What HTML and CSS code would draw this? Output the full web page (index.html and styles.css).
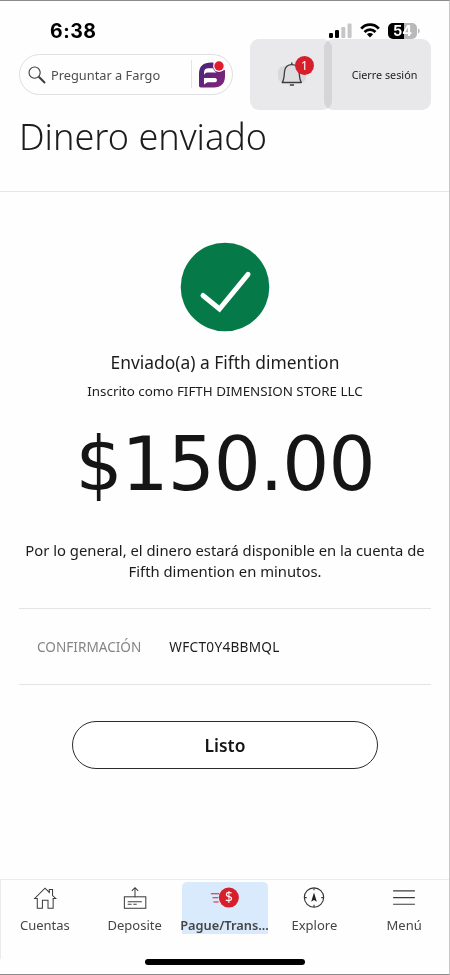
FILE: index.html
```html
<!DOCTYPE html>
<html lang="es">
<head>
  <meta charset="UTF-8">
  <meta name="viewport" content="width=device-width, initial-scale=1.0">
  <title>Dinero enviado</title>
  <link rel="stylesheet" href="styles.css">
</head>
<body>
  <div class="screen">
    <!-- Status bar -->
    <div class="status-bar">
      <span class="time">6:38</span>
      <div class="status-icons">
        <svg class="signal" width="23" height="15" viewBox="0 0 23 15">
          <rect x="0" y="10" width="4" height="5" rx="1.2" fill="#000"/>
          <rect x="6" y="7" width="4" height="8" rx="1.2" fill="#000"/>
          <rect x="12.3" y="4" width="4" height="11" rx="1.2" fill="#c6c6c8"/>
          <rect x="18.6" y="0.5" width="4" height="14.5" rx="1.2" fill="#c6c6c8"/>
        </svg>
        <svg class="wifi" width="20" height="15" viewBox="0 0 20 15" fill="none" stroke="#000" stroke-width="2.7">
          <path d="M1.2 5.6 C6 0.4 14 0.4 18.8 5.6"/>
          <path d="M4.5 9 C7.6 5.8 12.4 5.8 15.5 9"/>
          <path d="M10 14.6 L6.9 11.3 C8.7 9.7 11.3 9.7 13.1 11.3 Z" fill="#000" stroke="none"/>
        </svg>
        <div class="battery"><span>54</span></div>
        <svg class="battery-tip" width="2" height="6" viewBox="0 0 2 6">
          <path d="M0 0.5 C2.3 1.5 2.3 4.5 0 5.5 Z" fill="#b9b9bb"/>
        </svg>
      </div>
    </div>

    <!-- Search and account actions -->
    <div class="header">
      <div class="search">
        <svg width="18" height="18" viewBox="0 0 18 18" fill="none" stroke="#3c3c3c">
          <circle cx="6.6" cy="6.6" r="5.6" stroke-width="1.1"/>
          <path d="M10.8 10.8 L17 17" stroke-width="2"/>
        </svg>
        <span class="search-text">Preguntar a Fargo</span>
        <svg class="fargo" width="26" height="28" viewBox="0 0 26 28">
          <defs>
            <linearGradient id="purple" x1="0" y1="0" x2="1" y2="1">
              <stop offset="0" stop-color="#452478"/>
              <stop offset="1" stop-color="#87247c"/>
            </linearGradient>
          </defs>
          <path fill="url(#purple)" d="M0 25.5 V14 C0 6 4.5 2.5 12 2.5 H14 L20 11 L26 10 V16 C26 23.5 22 27.5 15 27.5 H2 C0.7 27.5 0 26.8 0 25.5 Z"/>
          <path fill="#fff" d="M5 15 V13 C5 9.6 6.5 8.2 9.5 8.2 H14.2 C14.7 10.2 16 11.6 17.6 12.4 H8.5 C6.8 12.4 5.6 13.4 5 15 Z"/>
          <path fill="#fff" d="M5 18 H16 C18.6 18 18.6 22.3 16 22.3 H8.5 L5 24.5 Z"/>
          <circle cx="20" cy="6" r="5.9" fill="#fff"/>
          <circle cx="20" cy="6" r="4.7" fill="#e31b2d"/>
        </svg>
      </div>
      <div class="actions">
        <div class="alerts">
          <svg width="36" height="34" viewBox="0 0 36 34">
            <rect x="0" y="9" width="28" height="17" rx="6" fill="#d9d9dc"/>
            <path d="M4.2 25.5 C6.3 22.5 6 19 6.6 14 C7.3 9.3 9.7 7.6 13.8 7.6 C17.9 7.6 20.3 9.3 21 14 C21.6 19 21.3 22.5 23.4 25.5 Z" fill="#dedee0" stroke="#3c3c3c" stroke-width="1.3" stroke-linejoin="round"/>
            <path d="M13.8 5.4 V7.6 M11.8 28 H16" fill="none" stroke="#3c3c3c" stroke-width="1.4"/>
          </svg>
          <span class="badge">1</span>
        </div>
        <div class="sign-off">Cierre sesión</div>
      </div>
    </div>

    <h1>Dinero enviado</h1>

    <!-- Confirmation details -->
    <div class="content">
      <svg class="check" width="90" height="90" viewBox="0 0 90 90">
        <circle cx="45" cy="45" r="44.3" fill="#057a48"/>
        <path d="M23 53.5 L39.5 67 L68 32.3" fill="none" stroke="#fff" stroke-width="5" stroke-linecap="round" stroke-linejoin="miter"/>
      </svg>
      <p class="recipient">Enviado(a) a Fifth dimention</p>
      <p class="enrolled">Inscrito como FIFTH DIMENSION STORE LLC</p>
      <p class="amount">$150.00</p>
      <p class="notice">Por lo general, el dinero estará disponible en la cuenta de<br>Fifth dimention en minutos.</p>
      <div class="confirmation">
        <span class="label">CONFIRMACIÓN</span>
        <span class="code">WFCT0Y4BBMQL</span>
      </div>
      <button class="done">Listo</button>
    </div>

    <!-- Bottom navigation -->
    <div class="nav">
      <div class="nav-item">
        <svg width="28" height="28" viewBox="0 0 28 28" fill="none" stroke="#3c3c3c" stroke-width="1.2">
          <path d="M4.5 14.5 L2 14.5 L14 2.5 L19 7.5 V4 H22.8 V11.2 L26.5 14.5 H23.5 V26 H17.5 V16.7 H11 V26 H5 V14.5 Z"/>
        </svg>
        <span>Cuentas</span>
      </div>
      <div class="nav-item">
        <svg width="28" height="28" viewBox="0 0 28 28" fill="none" stroke="#3c3c3c" stroke-width="1.2">
          <rect x="1.6" y="12.6" width="25" height="13.4"/>
          <path d="M14 13 V2 M10.3 5.6 L14 1.9 L17.7 5.6"/>
          <path d="M5.5 18.5 H22 M5.5 21.3 H10 M12 21.3 H16"/>
        </svg>
        <span>Deposite</span>
      </div>
      <div class="nav-item active">
        <svg width="34" height="28" viewBox="0 0 34 28">
          <path d="M0.5 9 H10 M2.5 13.8 H9 M3.5 18.6 H9.5" stroke="#d71e2b" stroke-width="1.2"/>
          <circle cx="21.5" cy="13.5" r="11.7" fill="#d71e2b"/>
          <text x="21.5" y="19.2" class="coin">$</text>
        </svg>
        <span>Pague/Trans...</span>
      </div>
      <div class="nav-item">
        <svg width="28" height="28" viewBox="0 0 28 28" fill="none" stroke="#333" stroke-width="1.3">
          <circle cx="14" cy="13.5" r="11.3"/>
          <path d="M14 2.5 V5 M14 22 V24.5 M3 13.5 H5.5 M22.5 13.5 H25"/>
          <path d="M14 7.5 L17.3 18.5 L14 16.3 L10.7 18.5 Z" fill="#222" stroke="none"/>
        </svg>
        <span>Explore</span>
      </div>
      <div class="nav-item">
        <svg width="28" height="28" viewBox="0 0 28 28" stroke="#3c3c3c" stroke-width="1.3">
          <path d="M1.3 5.7 H26.7 M1.3 13.5 H26.7 M1.3 21.3 H26.7"/>
        </svg>
        <span>Menú</span>
      </div>
    </div>
    <div class="home-indicator"></div>
  </div>
</body>
</html>
```
FILE: styles.css
```css
* {
  box-sizing: border-box;
}

body {
  margin: 0;
  background: #fff;
  color: #1c1c1c;
  font-family: "Noto Sans", sans-serif;
}

.screen {
  width: 450px;
  height: 975px;
  display: flex;
  flex-direction: column;
  overflow: hidden;
  background: #fefefe;
  border-top: 1px solid #8c8c8c;
  border-right: 1px solid #c9c9c9;
  border-bottom: 1px solid #8c8c8c;
}

/* Status bar */
.status-bar {
  height: 38px;
  padding: 21px 29px 0 50px;
  display: flex;
  justify-content: space-between;
  align-items: center;
}

.time {
  font-family: Inter, sans-serif;
  font-size: 19.5px;
  font-weight: 700;
  letter-spacing: 0.5px;
  color: #000;
}

.status-icons {
  display: flex;
  align-items: center;
  gap: 8px;
}

.battery {
  width: 29px;
  height: 16px;
  border-radius: 5px;
  background: linear-gradient(to right, #000 54%, #b9b9bb 54%);
  color: #fff;
  font-family: Inter, sans-serif;
  font-size: 14.5px;
  font-weight: 700;
  line-height: 16px;
  text-align: center;
}

.battery-tip {
  margin-left: -7px;
}

/* Header */
.header {
  height: 71px;
  padding: 0 18px 0 19px;
  display: flex;
  justify-content: space-between;
}

.search {
  width: 214px;
  height: 41px;
  margin-top: 15px;
  padding: 0 7px 0 8px;
  display: flex;
  align-items: center;
  border: 1px solid #dededf;
  border-radius: 21px;
}

.search-text {
  flex: 1;
  margin-left: 5px;
  font-size: 12.8px;
  color: #4d4d4d;
}

.search .fargo {
  box-sizing: content-box;
  margin-top: -2px;
  padding-left: 7px;
  border-left: 1px solid #e3e3e4;
}

.actions {
  display: flex;
}

.alerts {
  width: 82px;
  padding: 18px 0 0 28px;
  position: relative;
  border-radius: 9px;
  background: #e9e9eb;
}

/* The count sits on top of the bell */
.badge {
  position: absolute;
  top: 17px;
  left: 45px;
  width: 19px;
  height: 19px;
  border-radius: 50%;
  background: #d71e2b;
  color: #fff;
  font-size: 12px;
  line-height: 19px;
  text-align: center;
}

.sign-off {
  width: 107px;
  margin-left: -8px;
  padding-left: 14px;
  display: flex;
  align-items: center;
  justify-content: center;
  border-radius: 9px;
  background: #e9e9eb;
  mix-blend-mode: multiply;
  font-size: 10.8px;
}

h1 {
  height: 82px;
  margin: 0;
  padding: 3px 19px 0;
  border-bottom: 1px solid #e6e6e8;
  font-size: 36px;
  font-weight: 300;
  line-height: 48px;
}

/* Confirmation details */
.content {
  flex: 1;
  padding: 50px 18px 0 19px;
  display: flex;
  flex-direction: column;
  align-items: center;
  text-align: center;
}

.content p {
  margin: 0;
  white-space: nowrap;
}

.recipient {
  padding-top: 18px;
  font-size: 17.4px;
  line-height: 24px;
}

.enrolled {
  padding-top: 7px;
  font-size: 13.4px;
  line-height: 20px;
}

.content .amount {
  padding-top: 18px;
  font-family: "DejaVu Sans", sans-serif;
  font-size: 74px;
  line-height: 90px;
  letter-spacing: -1px;
  color: #151515;
}

.notice {
  padding-top: 31px;
  font-size: 14.8px;
  line-height: 21px;
}

.confirmation {
  width: 100%;
  height: 77px;
  margin-top: 26px;
  padding: 0 18px;
  display: flex;
  align-items: center;
  gap: 28px;
  border-top: 1px solid #e4e4e5;
  border-bottom: 1px solid #e4e4e5;
  font-size: 13.6px;
}

.label {
  color: #858585;
}

.code {
  letter-spacing: 0.3px;
}

.done {
  width: 306px;
  height: 48px;
  margin-top: 36px;
  border: 1px solid #2b2b2b;
  border-radius: 24px;
  background: #fff;
  color: #141414;
  font-family: inherit;
  font-size: 17.4px;
  font-weight: 600;
}

/* Bottom navigation */
.nav {
  height: 80px;
  padding-top: 2px;
  display: flex;
  border-top: 1px solid #ebebec;
  box-shadow: inset 1px 0 #ebebec;
}

.nav-item {
  width: 90px;
  height: 52px;
  padding-top: 4px;
  display: flex;
  flex-direction: column;
  align-items: center;
  font-size: 13px;
  line-height: 18px;
  color: #454545;
}

.nav-item span {
  margin-top: 6px;
  white-space: nowrap;
}

.nav .active {
  width: 86px;
  margin: 0 2px;
  border-radius: 5px 5px 0 0;
  background: #d9eafd;
  font-size: 12.8px;
  font-weight: 600;
}

.coin {
  fill: #fff;
  font-size: 16px;
  font-weight: 400;
  text-anchor: middle;
}

.home-indicator {
  width: 160px;
  height: 6px;
  margin: 0 auto 9px;
  border-radius: 3px;
  background: #000;
}
```
